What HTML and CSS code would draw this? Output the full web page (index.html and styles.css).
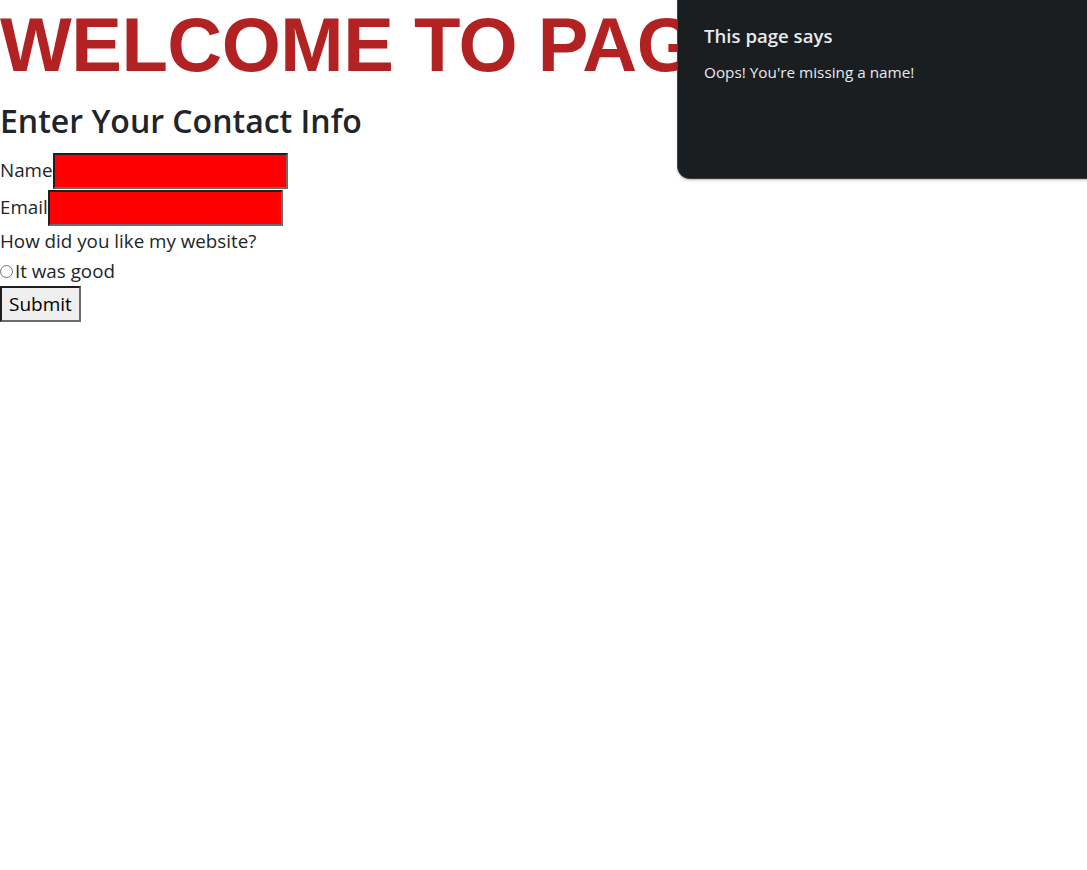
FILE: index.html
```html
<!DOCTYPE html>
<html>
<head>
<meta charset="utf-8">
<link rel="stylesheet" href="styles.css">
</head>
<body>
<h1 class="welcome">WELCOME TO PAGE</h1>
<h2 class="subtitle">Enter Your Contact Info</h2>
<form class="contact">
  <div class="row"><label>Name</label><input class="field name-field" type="text"></div>
  <div class="row"><label>Email</label><input class="field" type="text"></div>
  <div class="row question">How did you like my website?</div>
  <div class="row radio-row"><span class="radio"></span><span>It was good</span></div>
  <div class="row"><button class="submit" type="button">Submit</button></div>
</form>
<div class="dialog">
  <div class="dialog-title">This page says</div>
  <div class="dialog-msg">Oops! You're missing a name!</div>
</div>
</body>
</html>
```
FILE: styles.css
```css
html, body {
  margin: 0;
  padding: 0;
  background: #ffffff;
}
body {
  font-family: "Open Sans", "Noto Sans", sans-serif;
  color: #212529;
  font-size: 18.8px;
  width: 1087px;
  height: 870px;
  overflow: hidden;
  position: relative;
}
.welcome {
  margin: 0;
  font-family: "Liberation Sans", Arial, sans-serif;
  font-weight: bold;
  font-size: 76px;
  letter-spacing: -0.5px;
  line-height: 90px;
  color: #b22222;
  white-space: nowrap;
}
.subtitle {
  margin: 0;
  font-weight: 600;
  font-size: 32px;
  line-height: 62px;
  color: #212529;
}
.contact {
  display: flex;
  flex-direction: column;
}
.row {
  display: flex;
  align-items: center;
}
.row label {
  line-height: 37px;
}
.field {
  box-sizing: border-box;
  width: 235px;
  height: 36px;
  margin: 0;
  padding: 0;
  background: #ff0000;
  border: 2px solid;
  border-color: #1f1f1f #6b6b6b #6b6b6b #1f1f1f;
}
.question {
  line-height: 30px;
}
.radio-row {
  line-height: 30px;
}
.radio {
  box-sizing: border-box;
  width: 13px;
  height: 13px;
  border: 1px solid #767676;
  border-radius: 50%;
  margin-right: 2px;
}
.submit {
  box-sizing: border-box;
  height: 36px;
  margin: 0;
  padding: 0 7px;
  font-family: inherit;
  font-size: 19px;
  color: #000;
  background: #efefef;
  border: 2px solid;
  border-color: #1f1f1f #6b6b6b #6b6b6b #1f1f1f;
}
.dialog {
  position: absolute;
  left: 678px;
  top: -12px;
  width: 440px;
  height: 190px;
  box-sizing: border-box;
  padding: 35px 26px 0;
  background: #1a1e21;
  border-radius: 12px;
  box-shadow: 0 2px 3px rgba(0,0,0,0.3), 0 0 0 1px #4a4e52;
  color: #e8eaed;
}
.dialog-title {
  font-size: 18.6px;
  font-weight: 600;
  line-height: 26px;
}
.dialog-msg {
  margin-top: 12px;
  font-size: 15.3px;
  line-height: 22px;
}
```
